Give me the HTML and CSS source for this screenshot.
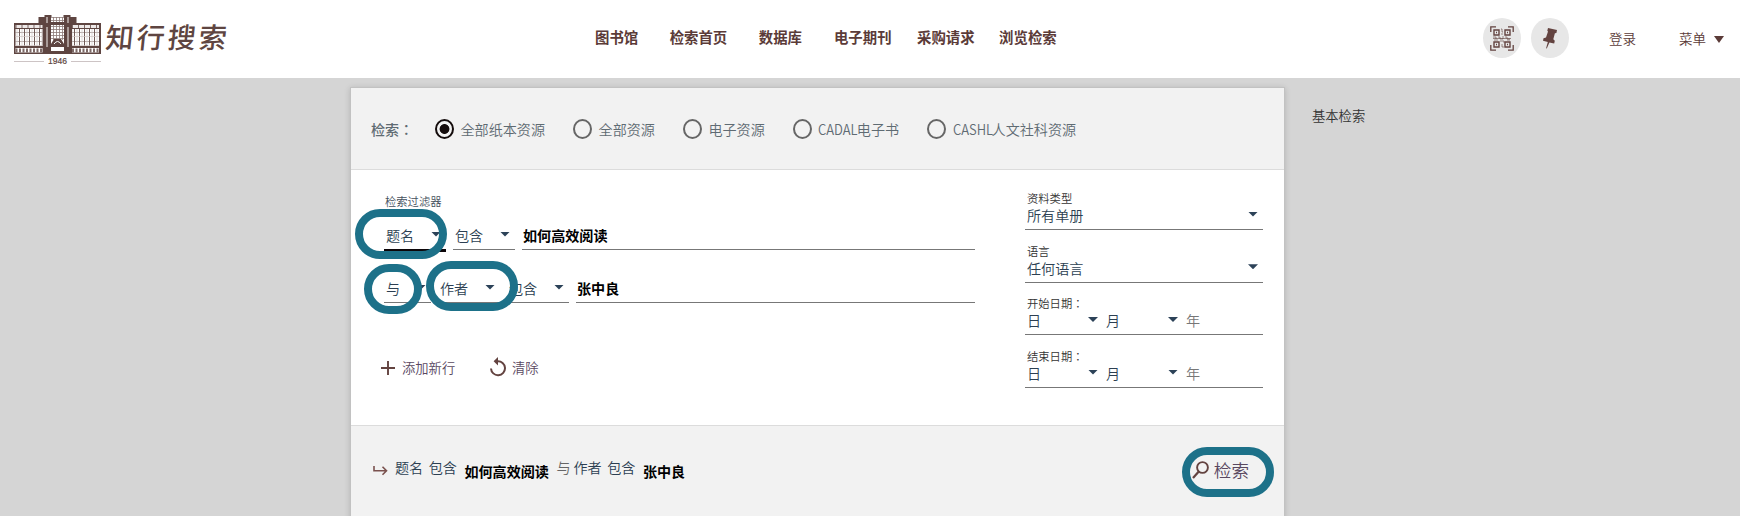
FILE: index.html
```html
<!DOCTYPE html>
<html lang="zh-CN">
<head>
<meta charset="utf-8">
<title>知行搜索</title>
<link rel="stylesheet" href="styles.css">
</head>
<body>
<header class="topbar">
  <div class="logo">
    <svg class="building" width="88" height="52" viewBox="0 0 88 52">
      <defs>
        <pattern id="panes" x="0" y="0" width="5" height="9" patternUnits="userSpaceOnUse">
          <path d="M0 0H5M.5 0V9" stroke="#6f5a56" stroke-width="1" fill="none"/>
          <path d="M0 4.5H5M3 0V9" stroke="#cfc6c4" stroke-width=".7" fill="none"/>
        </pattern>
        <pattern id="bars" width="3" height="3" patternUnits="userSpaceOnUse">
          <path d="M0 .5H3M.5 0V3" stroke="#8b7a77" stroke-width=".8" fill="none"/>
        </pattern>
      </defs>
      <path d="M0 9h31v31H0zM56 9h31v31H56z" fill="#5e4541"/>
      <path d="M1.500 11h27v3h-27zM58 11h27v3H58z" fill="#eee9e8"/>
      <path d="M1.500 11h27M58 11h27" transform="translate(0 1.500)" stroke="#7d6966" stroke-width="3" stroke-dasharray="1 5"/>
      <path d="M1.500 15h27v17h-27zM58 15h27v17H58z" fill="#fff"/>
      <path d="M1.500 15h27v17h-27zM58 15h27v17H58z" fill="url(#panes)"/>
      <path d="M1.500 34h27v4.500h-27zM58 34h27v4.500H58z" fill="#fff"/>
      <path d="M1.500 36.500h27M58 36.500h27" stroke="#7d6966" stroke-width="4" stroke-dasharray="2 1.500"/>
      <path d="M24.500 3h6V1h7v39h-7V9h-6zM62.500 3h-6V1h-7v39h7V9h6z" fill="#5e4541"/>
      <path d="M37 3h13v36H37z" fill="#fff"/>
      <path d="M37 3h13v23H37z" fill="url(#bars)"/>
      <path d="M37 8h13v3H37zM37 30l3-5h7l3 5v3H37zM30 37h27v3H30z" fill="#5e4541"/>
      <path d="M33 3v6M54 3v6M33 13v20M54 13v20" stroke="#a99b98" stroke-width="2"/>
      <path d="M40 30q3.500-5 7 0M41 34h5M40 36h7" stroke="#fff" fill="none"/>
      <path d="M0 47.500H30M57 47.500H87" stroke="#cdc4c5"/>
      <text class="year" x="34" y="50">1946</text>
    </svg>
    <span class="brand">知行搜索</span>
  </div>
  <nav class="nav">
    <a class="nav-a">图书馆</a><a class="nav-b">检索首页</a><a class="nav-c">数据库</a><a class="nav-d">电子期刊</a><a class="nav-e">采购请求</a><a>浏览检索</a>
  </nav>
  <div class="tools">
    <span class="disc"><svg width="24" height="25" viewBox="0 0 24 25" fill="none" stroke="#634340">
      <path d="M.8 6V.8H6M18 .8h5.200V6M.8 19v5.200H6M18 24.200h5.200V19" stroke-width="1.300"/>
      <path d="M4 4h5v5H4zM15 4h5v5h-5zM4 16h5v5H4z" stroke-width="1.400"/>
      <path d="M15 16h5v5h-5z" stroke-width="1.400"/>
      <path d="M6 6.500h1M17 6.500h1M6 18.500h1M17 18.500h1" stroke-width="1.500"/>
      <path d="M11 3h1v3h1M11 8h2M3 11h3v2M8 11h2v2h3v-3M15 11h2v2h3M4 14h4M10 15h4v2M17 14h3M12 18v3h2M3 12.500h18" opacity=".6"/>
    </svg></span>
    <span class="disc pin"><svg width="16" height="22" viewBox="0 0 16 22"><path d="M6 1l9 2-.6 3-1.500.2-1.600 6 1.500 1.500-.6 2.800-4.800-1-2.600 6-.7-.3L5.800 15 1 13.800l.5-2.500 2.500-.8L6 4.500 5.300 3.700z" fill="#634340"/></svg></span>
    <a class="login">登录</a>
    <a class="menu">菜单<svg width="10" height="7" viewBox="0 0 10 7"><path d="M0 0h10L5 7z" fill="#5b3b38"/></svg></a>
  </div>
</header>
<main class="page">
  <section class="card">
    <div class="scope">
      <span class="scope-title">检索<span class="colon" lang="zh-TW">：</span></span>
      <label class="opt"><i class="radio on"></i><span>全部纸本资源</span></label>
      <label class="opt"><i class="radio"></i><span>全部资源</span></label>
      <label class="opt"><i class="radio"></i><span>电子资源</span></label>
      <label class="opt"><i class="radio"></i><span><b class="lat lat-a">CADAL</b>电子书</span></label>
      <label class="opt"><i class="radio"></i><span><b class="lat lat-b">CASHL</b>人文社科资源</span></label>
    </div>
    <div class="form">
      <div class="filters">
        <div class="small filters-title">检索过滤器</div>
        <div class="row">
          <div class="sel active"><span>题名</span><i class="caret"></i></div>
          <div class="sel"><span>包含</span><i class="caret"></i></div>
          <div class="term"><span>如何高效阅读</span></div>
        </div>
        <div class="row second">
          <div class="sel short"><span>与</span><i class="caret"></i></div>
          <div class="sel"><span>作者</span><i class="caret"></i></div>
          <div class="sel"><span>包含</span><i class="caret"></i></div>
          <div class="term"><span>张中良</span></div>
        </div>
        <div class="actions">
          <svg width="14" height="14" viewBox="0 0 14 14"><path d="M7 0v14M0 7h14" stroke="#634340" stroke-width="1.900"/></svg>
          <span class="add">添加新行</span>
          <svg class="undo" width="16" height="20" viewBox="0 0 16 20"><path d="M7.500 4.200A7 7 0 1 1 1 11.500" fill="none" stroke="#634340" stroke-width="2"/><path d="M8 0v8.600L3.600 4.300z" fill="#634340"/></svg>
          <span class="clear">清除</span>
        </div>
      </div>
      <div class="facets">
        <div class="facet"><div class="small">资料类型</div><div class="val"><span>所有单册</span><i class="caret"></i></div></div>
        <div class="facet"><div class="small">语言</div><div class="val"><span>任何语言</span><i class="caret"></i></div></div>
        <div class="facet"><div class="small">开始日期<span class="colon" lang="zh-TW">：</span></div><div class="val date"><span>日</span><i class="caret"></i><span>月</span><i class="caret"></i><span class="yr">年</span></div></div>
        <div class="facet"><div class="small">结束日期<span class="colon" lang="zh-TW">：</span></div><div class="val date"><span>日</span><i class="caret"></i><span>月</span><i class="caret"></i><span class="yr">年</span></div></div>
      </div>
    </div>
    <div class="foot">
      <svg class="turn" width="15" height="11" viewBox="0 0 15 11"><path d="M1 1v4.800h12M9.500 1.800l4 4-4 4" fill="none" stroke="#7a514e" stroke-width="1.600"/></svg>
      <div class="query"><span>题名</span><span>包含</span><strong>如何高效阅读</strong><em>与</em><span>作者</span><span>包含</span><strong>张中良</strong></div>
      <div class="submit"><svg width="17" height="18" viewBox="0 0 17 18"><circle cx="10.500" cy="6.500" r="5.400" fill="none" stroke="#634340" stroke-width="1.900"/><path d="M6.800 10.500L1 17" stroke="#634340" stroke-width="2.200"/></svg><span>检索</span></div>
    </div>
    <i class="ring ring-field"></i>
    <i class="ring ring-and"></i>
    <i class="ring ring-author"></i>
    <i class="ring ring-submit"></i>
  </section>
  <a class="basic">基本检索</a>
</main>
</body>
</html>
```

FILE: styles.css
```css
* { box-sizing: border-box; }
body {
  margin: 0;
  height: 516px;
  overflow: hidden;
  background: #d5d5d5;
  font-family: "Noto Sans CJK SC", sans-serif;
  font-weight: 350;
  font-size: 14.1px;
  line-height: 20px;
  color: #2c3f52;
}
i, em { font-style: normal; }
span, a, strong, em { white-space: nowrap; }
.colon { font-family: "Noto Sans CJK TC", sans-serif; }

.topbar { display: flex; height: 78px; background: #fff; color: #5b3b38; }
.logo { display: flex; width: 595px; padding: 14px 0 0 14px; }
.building { display: block; }
.year { font: 8.500px "Liberation Sans", sans-serif; fill: #5e4541; stroke: #5e4541; stroke-width: .2px; }
.brand { margin: 1px 0 0 3px; font-size: 28px; line-height: 42px; font-weight: 500; letter-spacing: 3px; color: #5e4541; transform: skewX(-6deg); }
.nav { display: flex; width: 888px; padding-top: 27px; font-size: 14.4px; font-weight: 700; }
.nav-a { margin-right: 31.500px; }
.nav-b { margin-right: 31.500px; }
.nav-c { margin-right: 32px; }
.nav-d { margin-right: 25.500px; }
.nav-e { margin-right: 24.500px; }
.tools { display: flex; align-items: center; font-size: 13.5px; }
.disc { display: flex; align-items: center; justify-content: center; width: 38px; height: 40px; border-radius: 50%; background: #e7e7e7; margin: -2px 10px 0 0; }
.login { margin-left: 30px; width: 70px; }
.menu { display: flex; align-items: center; gap: 8px; }
.menu svg { margin-top: 3px; }
.tools a { margin-top: -3px; }

.page { display: flex; padding: 10px 0 0 351px; }
.card { position: relative; width: 933px; height: 440px; background: #fff; box-shadow: 0 0 0 1px #c2c2c2, 0 1px 6px 1px rgba(0, 0, 0, .16); }
.scope { display: flex; align-items: center; height: 82px; padding: 1px 0 0 20px; background: #f2f2f2; border-bottom: 1px solid #dcdcdc; color: #5f6b73; }
.scope-title { width: 64px; font-weight: 500; }
.opt { display: flex; align-items: center; gap: 6.500px; margin-right: 28px; }
.radio { width: 19px; height: 20px; border: 2px solid #666; border-radius: 50%; }
.radio.on { border-color: #140c0c; background: radial-gradient(circle, #140c0c 0 4.500px, transparent 5.300px); }
.lat { display: inline-block; font-weight: 350; transform-origin: 0 50%; transform: scaleX(.92); }
.lat-a { width: 38.500px; }
.lat-b { width: 39px; }

.form { display: flex; height: 256px; border-bottom: 1px solid #dcdcdc; padding-left: 33px; }
.small { font-size: 11.300px; line-height: 16px; padding-left: 2px; color: #333; }
.filters { width: 591px; padding-top: 23px; }
.filters-title { padding-left: 1px; color: #44505c; }
.row { display: flex; gap: 7px; height: 41px; }
.row.second { margin-top: 12px; }
.sel { display: flex; align-items: center; justify-content: space-between; width: 62px; height: 41px; padding: 12px 5px 0 2px; border-bottom: 1px solid #777; }
.sel.active { border-bottom: 3px solid #0c0609; height: 43px; }
.sel.short { width: 47px; }
.caret { width: 10px; height: 5px; background: #2c4258; clip-path: polygon(0 0, 100% 0, 50% 100%); margin-top: -2px; }
.term { flex: 1; height: 41px; padding: 16px 0 0 1px; border-bottom: 1px solid #777; color: #000; font-weight: 700; }
.actions { display: flex; align-items: center; height: 24px; margin: 53px 0 0 -3px; font-size: 13.300px; color: #59485f; }
.add { width: 88px; margin-left: 7px; }
.undo { margin-top: -2px; }
.clear { margin-left: 6px; }

.facets { width: 238px; margin-left: 50px; padding-top: 20px; }
.facet { height: 52.700px; }
.facet .val { display: flex; align-items: center; height: 24px; padding: 0 5px 5px 2px; border-bottom: 1px solid #777; }
.val .caret { margin-left: auto; }
.val.date span:first-child { width: 61px; }
.val.date .caret { margin-left: 0; margin-right: 8px; }
.val.date span:nth-child(3) { width: 62px; }
.val.date .yr { color: #777; }

.foot { display: flex; height: 102px; background: #f2f2f2; padding: 31px 35px 0 22px; }
.turn { margin-top: 8px; }
.query { display: flex; padding-left: 7px; gap: 5.500px; }
.query strong { margin: 4px 2px 0; font-weight: 700; color: #000; }
.query em { margin-right: -2.500px; color: #666; }
.submit { display: flex; align-items: center; gap: 5px; height: 26px; margin-left: auto; font-size: 17.600px; color: #59485f; }

.ring { position: absolute; height: 50px; border: 8px solid #1d7189; border-radius: 25px; }
.ring-field { left: 4px; top: 121px; width: 92px; }
.ring-and { left: 13px; top: 176px; width: 58px; }
.ring-author { left: 75px; top: 173px; width: 92px; }
.ring-submit { left: 831px; top: 359px; width: 92px; }
.basic { margin: 18px 0 0 28px; font-size: 13.300px; color: #333; }
```
